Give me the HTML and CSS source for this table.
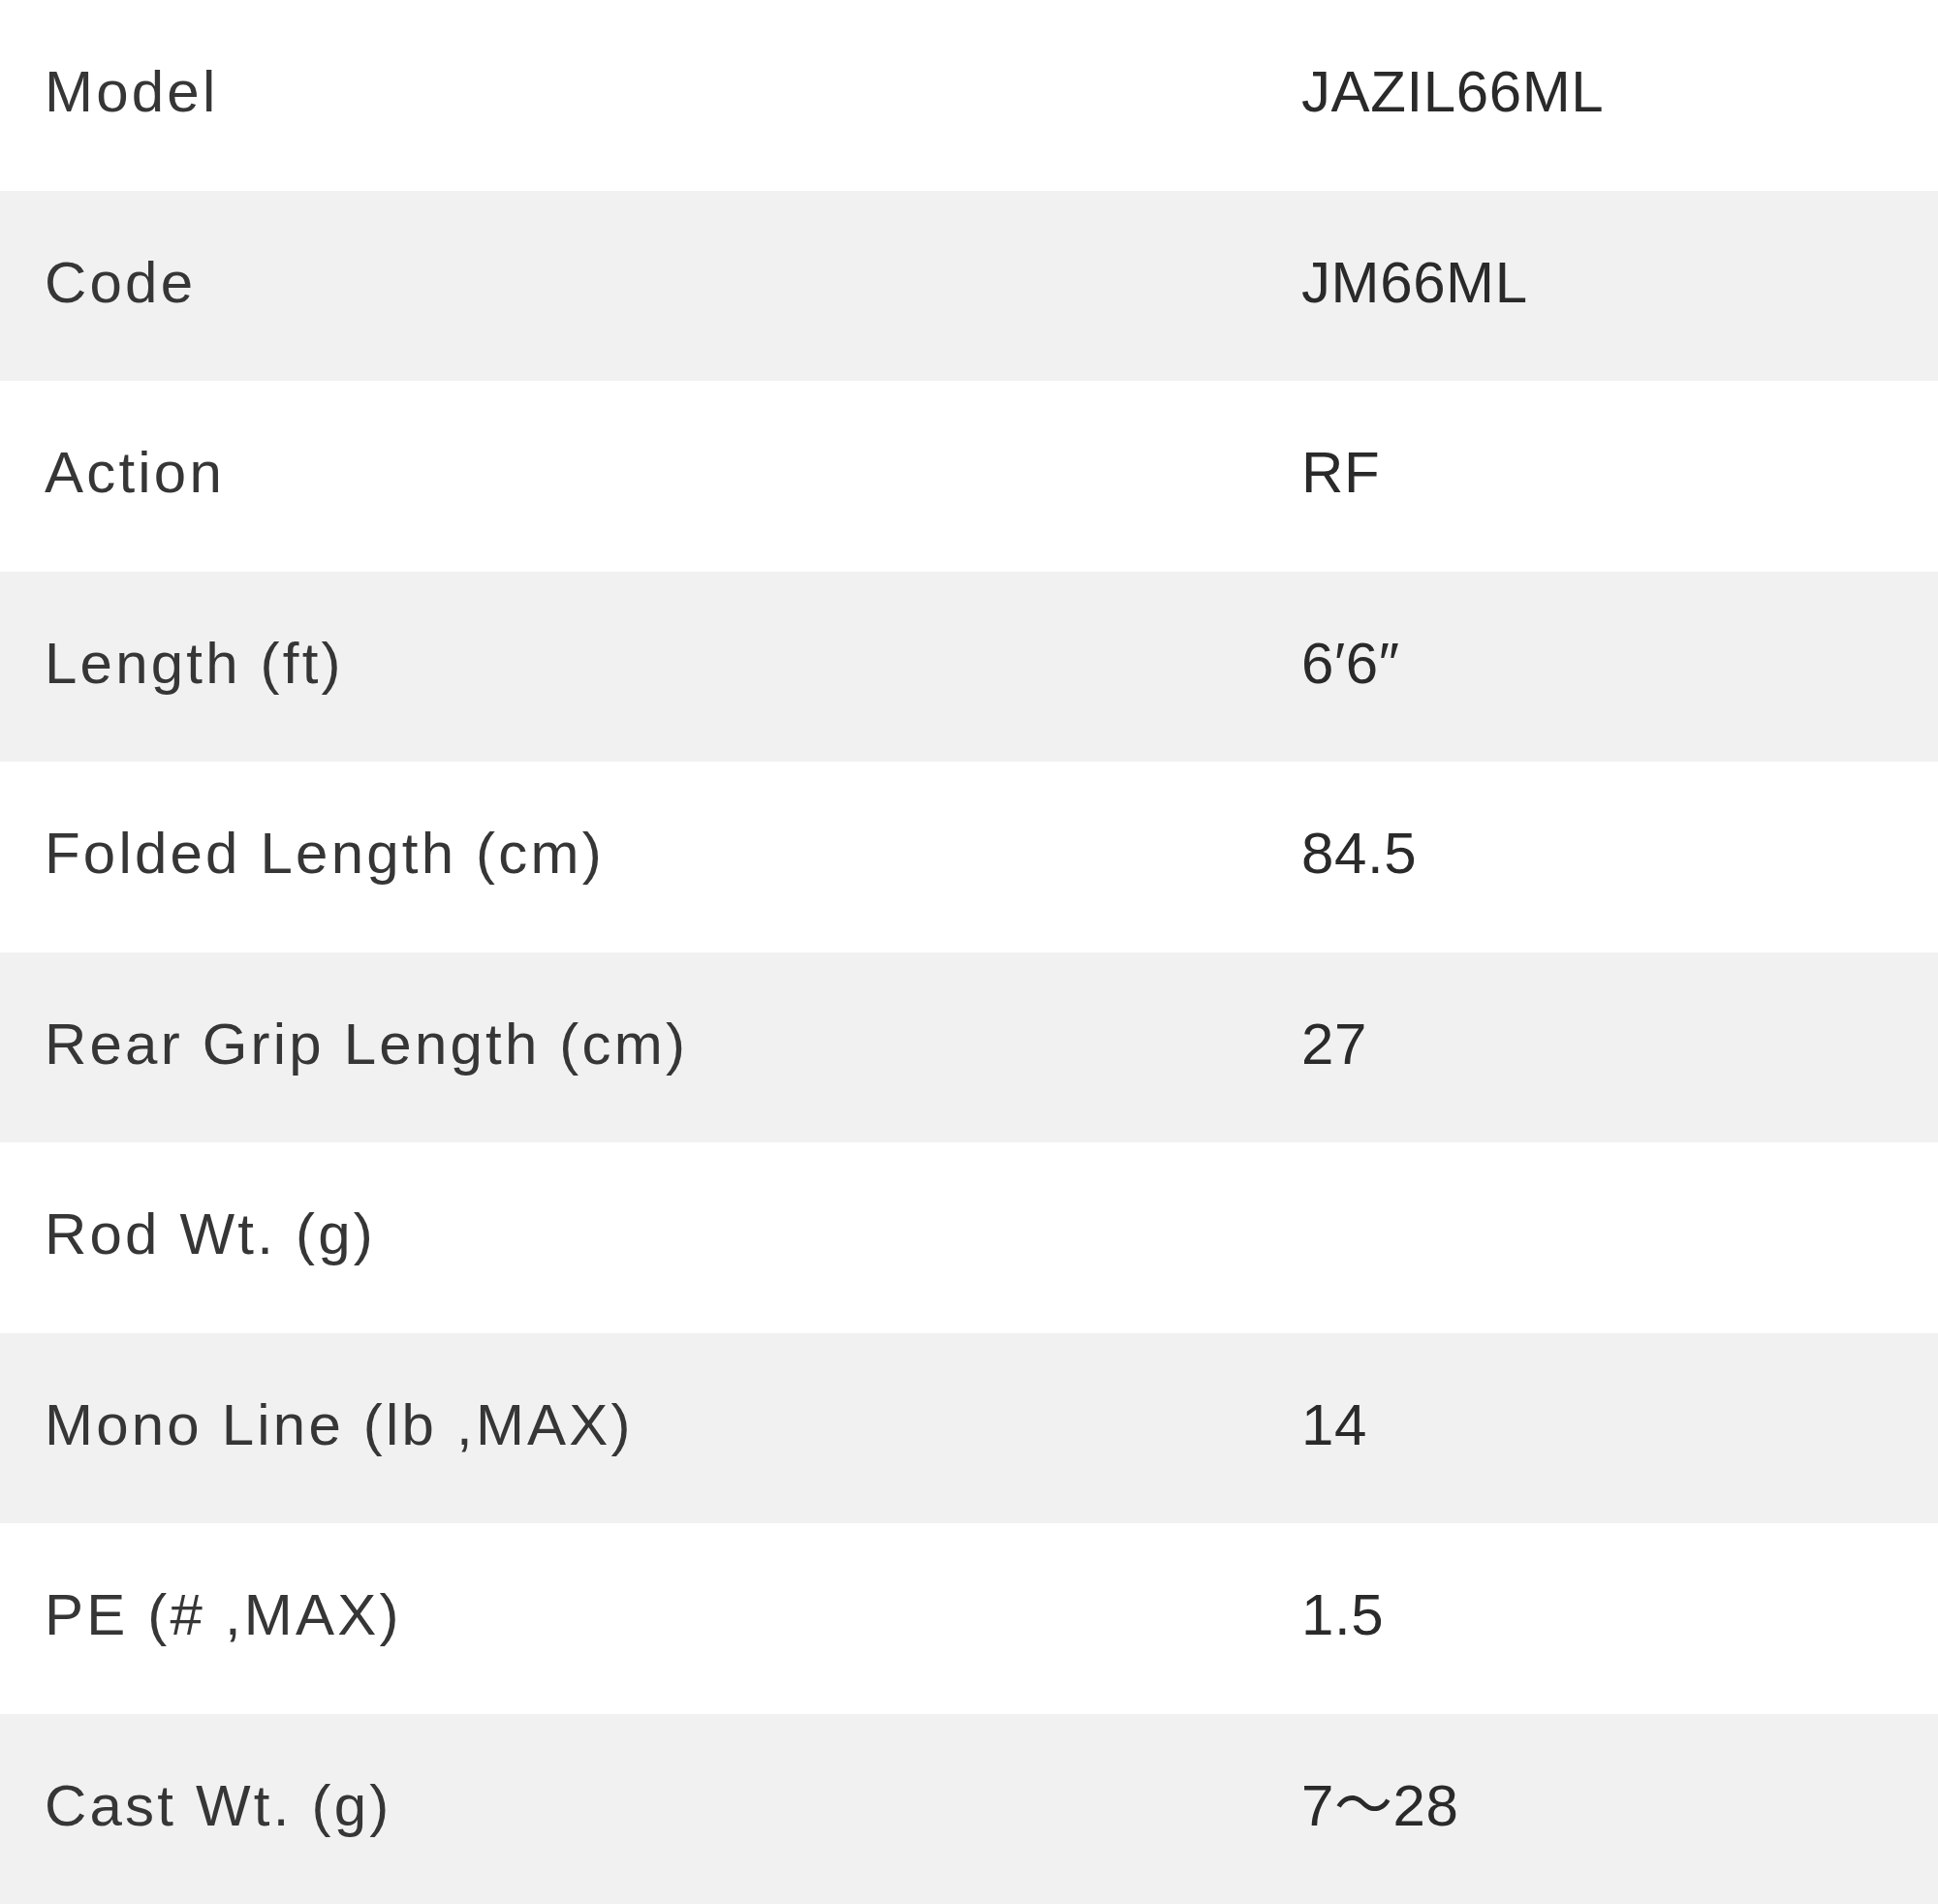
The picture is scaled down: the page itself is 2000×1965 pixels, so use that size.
FILE: index.html
```html
<!DOCTYPE html>
<html lang="en">
<head>
<meta charset="utf-8">
<title>Spec</title>
<link rel="stylesheet" href="styles.css">
</head>
<body>
<div class="spec">
  <div class="row"><div class="label">Model</div><div class="value">JAZIL66ML</div></div>
  <div class="row alt"><div class="label">Code</div><div class="value">JM66ML</div></div>
  <div class="row"><div class="label">Action</div><div class="value">RF</div></div>
  <div class="row alt"><div class="label">Length (ft)</div><div class="value">6′6″</div></div>
  <div class="row"><div class="label">Folded Length (cm)</div><div class="value">84.5</div></div>
  <div class="row alt"><div class="label">Rear Grip Length (cm)</div><div class="value">27</div></div>
  <div class="row"><div class="label">Rod Wt. (g)</div><div class="value"></div></div>
  <div class="row alt"><div class="label">Mono Line (lb ,MAX)</div><div class="value">14</div></div>
  <div class="row"><div class="label">PE (# ,MAX)</div><div class="value">1.5</div></div>
  <div class="row alt"><div class="label">Cast Wt. (g)</div><div class="value">7～28</div></div>
</div>
</body>
</html>
```
FILE: styles.css
```css
html, body {
  margin: 0;
  padding: 0;
  background: #ffffff;
}
.spec {
  width: 2000px;
  height: 1965px;
  display: grid;
  grid-template-rows: repeat(10, 1fr);
  font-family: "Liberation Sans", "Noto Sans CJK JP", sans-serif;
  font-size: 60px;
}
.row {
  display: grid;
  grid-template-columns: 1297px 1fr;
  align-items: start;
  padding-left: 46px;
  padding-top: 61px;
  box-sizing: border-box;
  background: #ffffff;
  line-height: 67px;
}
.row.alt {
  background: #f1f1f1;
}
.label {
  color: #363636;
  letter-spacing: 3.2px;
  white-space: nowrap;
  height: 67px;
}
.value {
  color: #2a2a2a;
  letter-spacing: 0.6px;
  white-space: nowrap;
  height: 67px;
}
```
